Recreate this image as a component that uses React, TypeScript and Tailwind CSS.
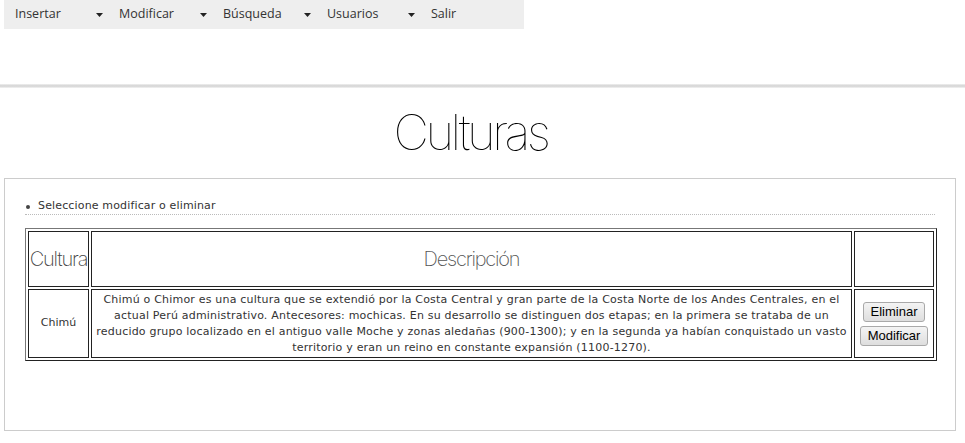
import React from 'react';

const menuItems = ['Insertar', 'Modificar', 'Búsqueda', 'Usuarios', 'Salir'];

const Arrow: React.FC = () => (
  <svg width="7" height="4" viewBox="0 0 7 4" aria-hidden="true">
    <path d="M0 0h7L3.5 4z" fill="#222" />
  </svg>
);

const App: React.FC = () => {
  return (
    <div className="w-[965px] h-[443px] bg-white overflow-hidden font-['DejaVu_Sans',Verdana,sans-serif]">
      <nav className="ml-[4px] w-[520px] h-[29px] bg-[#eeeeee] flex">
        {menuItems.map((item, i) => (
          <div
            key={item}
            className="w-[104px] h-full flex items-center justify-between pl-[11px] pr-[5px] text-[12.5px] text-[#333] font-['Open_Sans',sans-serif]"
          >
            <span>{item}</span>
            {i < menuItems.length - 1 && <Arrow />}
          </div>
        ))}
      </nav>

      <div className="mt-[55px] h-[4px] bg-gradient-to-b from-[#f0f0f0] via-[#d2d2d2] to-[#f4f4f4]" />

      <h1 className="h-[90px] pt-[15px] pr-[24px] text-center text-[49px] leading-[60px] text-black font-thin tracking-[-3.5px] font-['Inter',sans-serif]">
        Culturas
      </h1>

      <div className="ml-[4px] w-[952px] h-[253px] border border-[#cccccc] px-[20px] pt-[20px]">
        <ul>
          <li className="flex items-center h-[16px] border-b border-dotted border-[#bbbbbb] text-[11px] tracking-[0.15px] text-[#333]">
            <span className="w-[4px] h-[4px] rounded-full bg-[#444] ml-[1px] mr-[8px]" />
            Seleccione modificar o eliminar
          </li>
        </ul>

        <table className="mt-[13px] w-[911px] table-fixed border-separate border-spacing-[2px] border border-t-[#777] border-l-[#777] border-r-[#222] border-b-[#222]">
          <thead>
            <tr className="h-[56px]">
              <th className="w-[61px] p-0 border border-[#222] text-[20px] font-[250] text-[#444] tracking-[-1.2px] font-['Inter',sans-serif] whitespace-nowrap overflow-hidden">
                Cultura
              </th>
              <th className="w-[761px] p-0 border border-[#222] text-[20px] font-[250] text-[#555] tracking-[-1.2px] font-['Inter',sans-serif]">
                Descripción
              </th>
              <th className="w-[80px] p-0 border border-[#222]" />
            </tr>
          </thead>
          <tbody>
            <tr className="h-[69px]">
              <td className="p-0 border border-[#222] text-center text-[11px] font-normal text-[#333]">Chimú</td>
              <td className="px-[2px] border border-[#222] text-center text-[11px] leading-[16px] tracking-[0.2px] text-[#333] whitespace-nowrap">
                Chimú o Chimor es una cultura que se extendió por la Costa Central y gran parte de la Costa Norte de los Andes Centrales, en el
                <br />
                actual Perú administrativo. Antecesores: mochicas. En su desarrollo se distinguen dos etapas; en la primera se trataba de un
                <br />
                reducido grupo localizado en el antiguo valle Moche y zonas aledañas (900-1300); y en la segunda ya habían conquistado un vasto
                <br />
                territorio y eran un reino en constante expansión (1100-1270).
              </td>
              <td className="p-0 border border-[#222]">
                <div className="flex flex-col items-center gap-[4px]">
                  <button className="h-[20px] px-[7px] text-[13px] leading-none text-black bg-gradient-to-b from-[#f4f4f4] to-[#dedede] border border-[#a9a9a9] rounded-[3px] font-['Liberation_Sans',Arial,sans-serif]">
                    Eliminar
                  </button>
                  <button className="h-[20px] px-[7px] text-[13px] leading-none text-black bg-gradient-to-b from-[#f4f4f4] to-[#dedede] border border-[#a9a9a9] rounded-[3px] font-['Liberation_Sans',Arial,sans-serif]">
                    Modificar
                  </button>
                </div>
              </td>
            </tr>
          </tbody>
        </table>
      </div>
    </div>
  );
};

export default App;
